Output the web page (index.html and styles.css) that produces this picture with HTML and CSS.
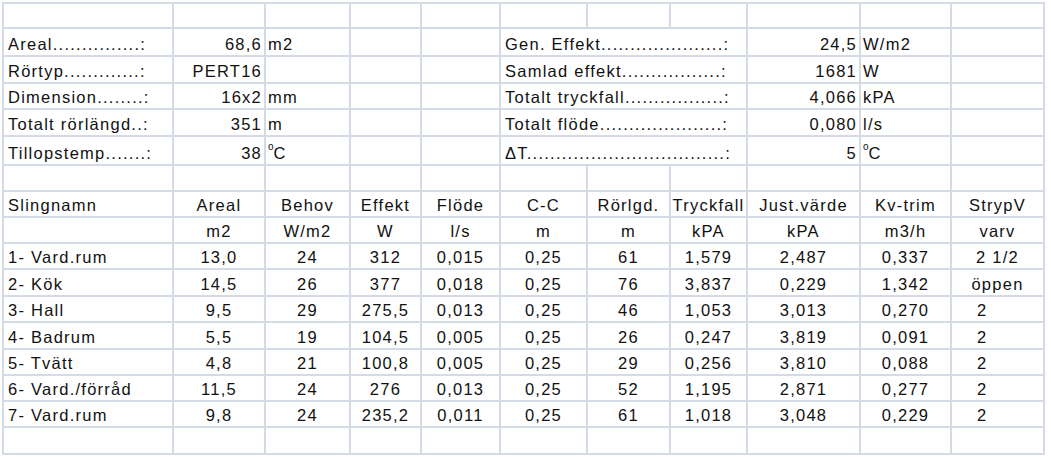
FILE: index.html
```html
<!DOCTYPE html>
<html lang="sv">
<head>
<meta charset="utf-8">
<title>Slingor</title>
<link rel="stylesheet" href="styles.css">
</head>
<body>
<div class="sheet">
  <div class="row"><div class="c"></div><div class="c"></div><div class="c"></div><div class="c"></div><div class="c"></div><div class="c"></div><div class="c"></div><div class="c"></div><div class="c"></div><div class="c"></div><div class="c"></div></div>

  <div class="row">
    <div class="c l">Areal...............:</div>
    <div class="c r">68,6</div><div class="c u">m2</div><div class="c"></div><div class="c"></div>
    <div class="c l span3">Gen. Effekt.....................:</div>
    <div class="c r">24,5</div><div class="c u">W/m2</div><div class="c"></div>
  </div>
  <div class="row">
    <div class="c l">Rörtyp.............:</div>
    <div class="c r">PERT16</div><div class="c u"></div><div class="c"></div><div class="c"></div>
    <div class="c l span3">Samlad effekt.................:</div>
    <div class="c r">1681</div><div class="c u">W</div><div class="c"></div>
  </div>
  <div class="row">
    <div class="c l">Dimension........:</div>
    <div class="c r">16x2</div><div class="c u">mm</div><div class="c"></div><div class="c"></div>
    <div class="c l span3">Totalt tryckfall.................:</div>
    <div class="c r">4,066</div><div class="c u">kPA</div><div class="c"></div>
  </div>
  <div class="row">
    <div class="c l">Totalt rörlängd..:</div>
    <div class="c r">351</div><div class="c u">m</div><div class="c"></div><div class="c"></div>
    <div class="c l span3">Totalt flöde.....................:</div>
    <div class="c r">0,080</div><div class="c u">l/s</div><div class="c"></div>
  </div>
  <div class="row">
    <div class="c l">Tillopstemp.......:</div>
    <div class="c r">38</div><div class="c u"><span class="deg">o</span>C</div><div class="c"></div><div class="c"></div>
    <div class="c l span3">ΔT..................................:</div>
    <div class="c r">5</div><div class="c u"><span class="deg">o</span> C</div><div class="c"></div>
  </div>

  <div class="row"><div class="c"></div><div class="c"></div><div class="c"></div><div class="c"></div><div class="c"></div><div class="c"></div><div class="c"></div><div class="c"></div><div class="c"></div><div class="c"></div><div class="c"></div></div>

  <div class="row">
    <div class="c l">Slingnamn</div><div class="c m">Areal</div><div class="c m">Behov</div><div class="c m">Effekt</div><div class="c m">Flöde</div><div class="c m">C-C</div><div class="c m">Rörlgd.</div><div class="c m">Tryckfall</div><div class="c m">Just.värde</div><div class="c m">Kv-trim</div><div class="c m">StrypV</div>
  </div>
  <div class="row">
    <div class="c l"></div><div class="c m">m2</div><div class="c m">W/m2</div><div class="c m">W</div><div class="c m">l/s</div><div class="c m">m</div><div class="c m">m</div><div class="c m">kPA</div><div class="c m">kPA</div><div class="c m">m3/h</div><div class="c m">varv</div>
  </div>
  <div class="row">
    <div class="c l">1- Vard.rum</div><div class="c m">13,0</div><div class="c m">24</div><div class="c m">312</div><div class="c m">0,015</div><div class="c m">0,25</div><div class="c m">61</div><div class="c m">1,579</div><div class="c m">2,487</div><div class="c m">0,337</div><div class="c m">2 1/2</div>
  </div>
  <div class="row">
    <div class="c l">2- Kök</div><div class="c m">14,5</div><div class="c m">26</div><div class="c m">377</div><div class="c m">0,018</div><div class="c m">0,25</div><div class="c m">76</div><div class="c m">3,837</div><div class="c m">0,229</div><div class="c m">1,342</div><div class="c m">öppen</div>
  </div>
  <div class="row">
    <div class="c l">3- Hall</div><div class="c m">9,5</div><div class="c m">29</div><div class="c m">275,5</div><div class="c m">0,013</div><div class="c m">0,25</div><div class="c m">46</div><div class="c m">1,053</div><div class="c m">3,013</div><div class="c m">0,270</div><div class="c v">2</div>
  </div>
  <div class="row">
    <div class="c l">4- Badrum</div><div class="c m">5,5</div><div class="c m">19</div><div class="c m">104,5</div><div class="c m">0,005</div><div class="c m">0,25</div><div class="c m">26</div><div class="c m">0,247</div><div class="c m">3,819</div><div class="c m">0,091</div><div class="c v">2</div>
  </div>
  <div class="row">
    <div class="c l">5- Tvätt</div><div class="c m">4,8</div><div class="c m">21</div><div class="c m">100,8</div><div class="c m">0,005</div><div class="c m">0,25</div><div class="c m">29</div><div class="c m">0,256</div><div class="c m">3,810</div><div class="c m">0,088</div><div class="c v">2</div>
  </div>
  <div class="row">
    <div class="c l">6- Vard./förråd</div><div class="c m">11,5</div><div class="c m">24</div><div class="c m">276</div><div class="c m">0,013</div><div class="c m">0,25</div><div class="c m">52</div><div class="c m">1,195</div><div class="c m">2,871</div><div class="c m">0,277</div><div class="c v">2</div>
  </div>
  <div class="row">
    <div class="c l">7- Vard.rum</div><div class="c m">9,8</div><div class="c m">24</div><div class="c m">235,2</div><div class="c m">0,011</div><div class="c m">0,25</div><div class="c m">61</div><div class="c m">1,018</div><div class="c m">3,048</div><div class="c m">0,229</div><div class="c v">2</div>
  </div>

  <div class="row"><div class="c"></div><div class="c"></div><div class="c"></div><div class="c"></div><div class="c"></div><div class="c"></div><div class="c"></div><div class="c"></div><div class="c"></div><div class="c"></div><div class="c"></div></div>
</div>
</body>
</html>
```

FILE: styles.css
```css
html, body {
  margin: 0;
  padding: 0;
  background: #ffffff;
}

body {
  font-family: "Liberation Sans", Arial, sans-serif;
  font-size: 16.5px;
  letter-spacing: 1.25px;
  color: #111111;
}

.sheet {
  display: grid;
  grid-template-columns: 168px 90px 83px 69px 77px 85px 81px 75px 111px 89px 91px;
  grid-template-rows: 23px 26px 25px 24px 25px 27px 24px 24px 24px 24px 25px 24px 25px 24px 24px 24px 25px;
  gap: 2px;
  padding: 2px;
  margin: 2px 0 0 2px;
  width: max-content;
  background: #d5dbe6;
}

.row {
  display: contents;
}

.c {
  background: #ffffff;
  display: flex;
  align-items: flex-end;
  line-height: 19px;
  padding-bottom: 1px;
  white-space: nowrap;
  min-width: 0;
}

.l {
  justify-content: flex-start;
  padding-left: 4px;
}

.r {
  justify-content: flex-end;
  padding-right: 2px;
}

.u {
  justify-content: flex-start;
  padding-left: 2px;
}

.m {
  justify-content: center;
}

.v {
  justify-content: flex-start;
  padding-left: 25px;
}

.span3 {
  grid-column: span 3;
}

.deg {
  font-size: 10px;
  letter-spacing: 0;
  position: relative;
  top: -7px;
}
```
